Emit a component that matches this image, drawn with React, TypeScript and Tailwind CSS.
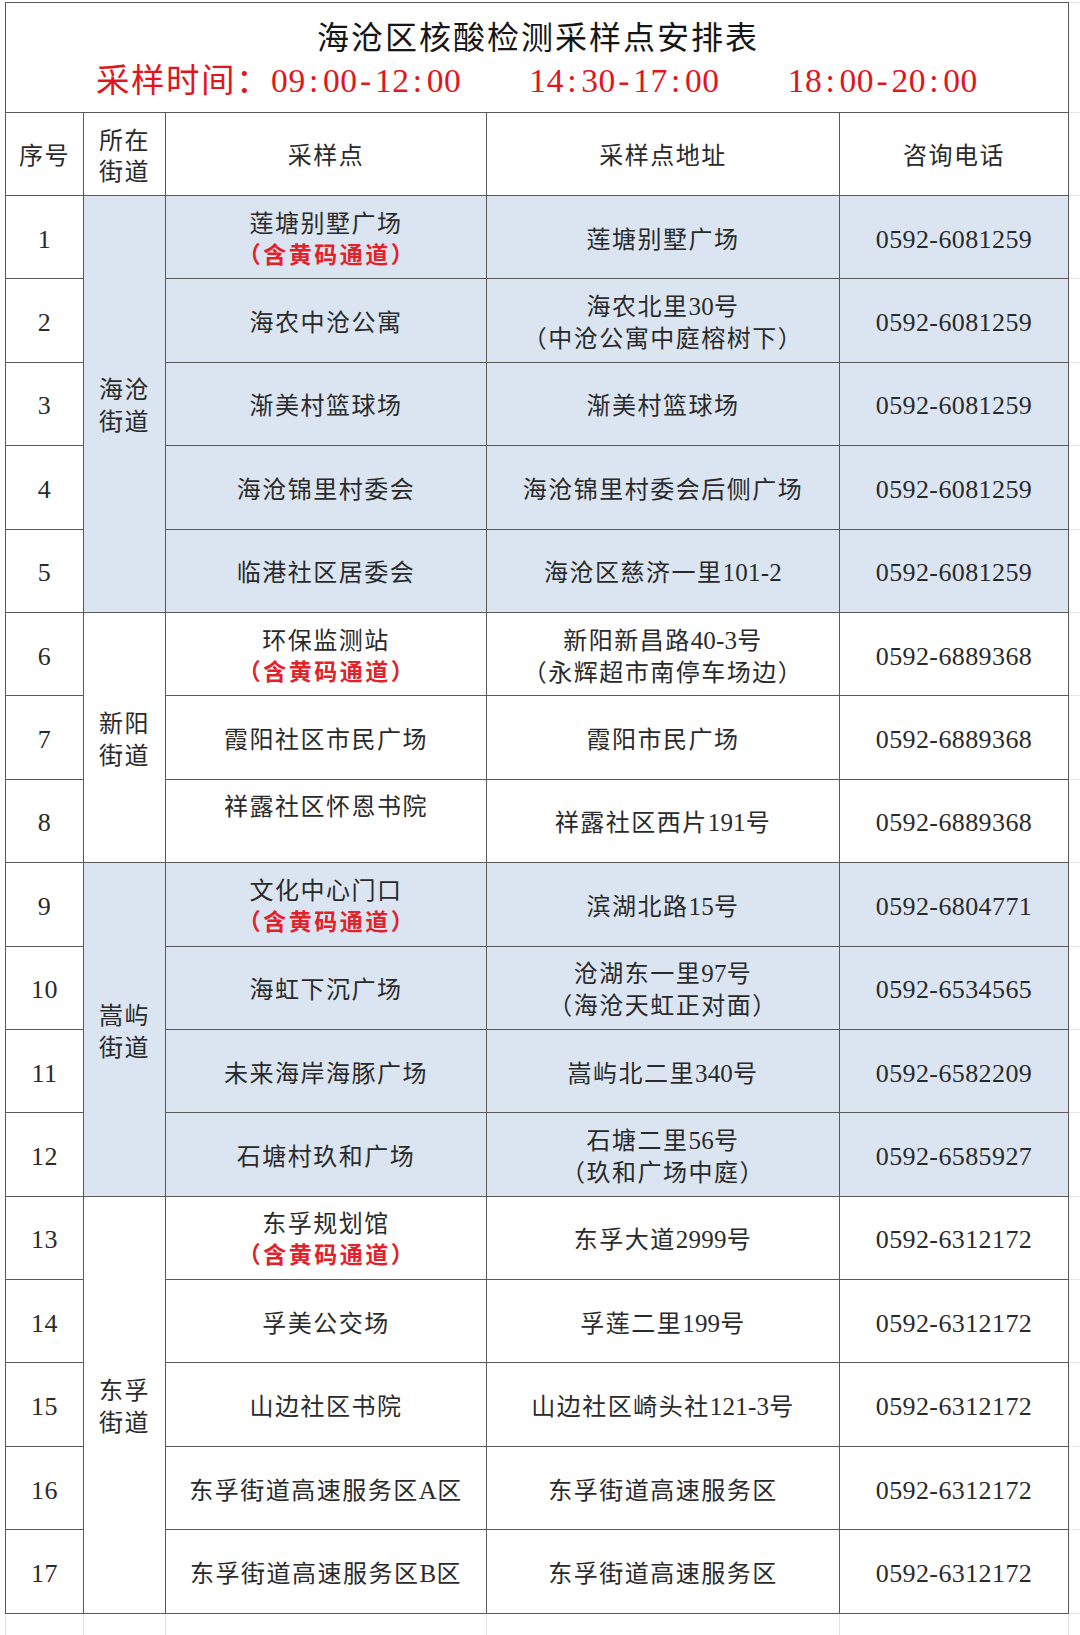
import React from "react";

type Row = {
  n: number;
  site: string;
  tag?: boolean;
  siteBlank?: boolean;
  addr: string[];
  phone: string;
};

type Group = { name: [string, string]; blue: boolean; span: string; rows: Row[] };

const groups: Group[] = [
  {
    name: ["海沧", "街道"],
    blue: true,
    span: "row-span-5",
    rows: [
      { n: 1, site: "莲塘别墅广场", tag: true, addr: ["莲塘别墅广场"], phone: "0592-6081259" },
      { n: 2, site: "海农中沧公寓", addr: ["海农北里30号", "（中沧公寓中庭榕树下）"], phone: "0592-6081259" },
      { n: 3, site: "渐美村篮球场", addr: ["渐美村篮球场"], phone: "0592-6081259" },
      { n: 4, site: "海沧锦里村委会", addr: ["海沧锦里村委会后侧广场"], phone: "0592-6081259" },
      { n: 5, site: "临港社区居委会", addr: ["海沧区慈济一里101-2"], phone: "0592-6081259" },
    ],
  },
  {
    name: ["新阳", "街道"],
    blue: false,
    span: "row-span-3",
    rows: [
      { n: 6, site: "环保监测站", tag: true, addr: ["新阳新昌路40-3号", "（永辉超市南停车场边）"], phone: "0592-6889368" },
      { n: 7, site: "霞阳社区市民广场", addr: ["霞阳市民广场"], phone: "0592-6889368" },
      { n: 8, site: "祥露社区怀恩书院", siteBlank: true, addr: ["祥露社区西片191号"], phone: "0592-6889368" },
    ],
  },
  {
    name: ["嵩屿", "街道"],
    blue: true,
    span: "row-span-4",
    rows: [
      { n: 9, site: "文化中心门口", tag: true, addr: ["滨湖北路15号"], phone: "0592-6804771" },
      { n: 10, site: "海虹下沉广场", addr: ["沧湖东一里97号", "（海沧天虹正对面）"], phone: "0592-6534565" },
      { n: 11, site: "未来海岸海豚广场", addr: ["嵩屿北二里340号"], phone: "0592-6582209" },
      { n: 12, site: "石塘村玖和广场", addr: ["石塘二里56号", "（玖和广场中庭）"], phone: "0592-6585927" },
    ],
  },
  {
    name: ["东孚", "街道"],
    blue: false,
    span: "row-span-5",
    rows: [
      { n: 13, site: "东孚规划馆", tag: true, addr: ["东孚大道2999号"], phone: "0592-6312172" },
      { n: 14, site: "孚美公交场", addr: ["孚莲二里199号"], phone: "0592-6312172" },
      { n: 15, site: "山边社区书院", addr: ["山边社区崎头社121-3号"], phone: "0592-6312172" },
      { n: 16, site: "东孚街道高速服务区A区", addr: ["东孚街道高速服务区"], phone: "0592-6312172" },
      { n: 17, site: "东孚街道高速服务区B区", addr: ["东孚街道高速服务区"], phone: "0592-6312172" },
    ],
  },
];

const FONT = "[font-family:'Liberation_Serif','Noto_Sans_CJK_SC',serif]";

function Mono({ s }: { s: string }) {
  return (
    <>
      {s.split("").map((c, i) => (
        <span key={i} className="inline-block w-[17.3px] text-center">
          {c}
        </span>
      ))}
    </>
  );
}

function Txt({ s }: { s: string }) {
  const parts = s.split(/([0-9A-Za-z\-]+)/);
  return (
    <span>
      {parts.map((p, i) =>
        /^[0-9A-Za-z\-]+$/.test(p) ? (
          <span key={i} className="text-[25px] tracking-[0.2px]">
            {p}
          </span>
        ) : (
          <React.Fragment key={i}>{p}</React.Fragment>
        )
      )}
    </span>
  );
}

const line = "border-[#5a5a5a]";

export default function App() {
  const cells: React.ReactNode[] = [];

  // title row
  cells.push(
    <div
      key="title"
      className={`col-span-5 border-l border-r border-t border-b ${line} bg-white flex flex-col items-center pt-[15px]`}
    >
      <div className="text-[32px] leading-[40px] tracking-[2px] text-[#161616] pl-[2px]">
        海沧区核酸检测采样点安排表
      </div>
      <div className="mt-[3px] flex text-[33.5px] leading-[40px] text-[#e3141c]">
        <span>采样时间：</span>
        <Mono s="09:00-12:00" />
        <span className="ml-[68px]">
          <Mono s="14:30-17:00" />
        </span>
        <span className="ml-[68px]">
          <Mono s="18:00-20:00" />
        </span>
      </div>
    </div>
  );
  cells.push(<div key="title-x" className="border-t border-b border-[#e6e6e6]" />);

  // header row
  const hdr = `border-r border-b ${line} bg-white flex flex-col items-center justify-center leading-[31px] pt-[5px]`;
  cells.push(
    <div key="h1" className={`border-l ${hdr}`}>
      序号
    </div>
  );
  cells.push(
    <div key="h2" className={hdr}>
      <span>所在</span>
      <span>街道</span>
    </div>
  );
  cells.push(
    <div key="h3" className={hdr}>
      采样点
    </div>
  );
  cells.push(
    <div key="h4" className={hdr}>
      采样点地址
    </div>
  );
  cells.push(
    <div key="h5" className={hdr}>
      咨询电话
    </div>
  );
  cells.push(<div key="h-x" className="border-b border-[#e6e6e6]" />);

  groups.forEach((g) => {
    const bg = g.blue ? "bg-[#dbe5f1]" : "bg-white";
    g.rows.forEach((r, idx) => {
      const base = `border-r border-b ${line} flex flex-col items-center justify-center leading-[32px] pt-[5px]`;
      cells.push(
        <div key={`n${r.n}`} className={`border-l ${base} bg-white text-[26px] tracking-[0.5px]`}>
          {r.n}
        </div>
      );
      if (idx === 0) {
        cells.push(
          <div key={`d${r.n}`} className={`${g.span} ${base} ${bg} leading-[31px]`}>
            <span>{g.name[0]}</span>
            <span>{g.name[1]}</span>
          </div>
        );
      }
      cells.push(
        <div key={`s${r.n}`} className={`${base} ${bg}`}>
          <Txt s={r.site} />
          {r.tag && (
            <span className="text-[23px] tracking-[2.5px] pl-[2px] font-bold text-[#e3212a]">（含黄码通道）</span>
          )}
          {r.siteBlank && <span>&nbsp;</span>}
        </div>
      );
      cells.push(
        <div key={`a${r.n}`} className={`${base} ${bg} leading-[31px]`}>
          {r.addr.map((a, i) => (
            <Txt key={i} s={a} />
          ))}
        </div>
      );
      cells.push(
        <div key={`p${r.n}`} className={`${base} ${bg} text-[26px] tracking-[0.4px]`}>
          {r.phone}
        </div>
      );
      cells.push(<div key={`x${r.n}`} className="border-b border-[#e6e6e6]" />);
    });
  });

  // faint trailing row
  const faint = "border-r border-[#e2e2e2]";
  cells.push(<div key="f1" className={`border-l ${faint}`} />);
  cells.push(<div key="f2" className={faint} />);
  cells.push(<div key="f3" className={faint} />);
  cells.push(<div key="f4" className={faint} />);
  cells.push(<div key="f5" className={faint} />);
  cells.push(<div key="f6" />);

  return (
    <div className={`w-[1080px] h-[1635px] bg-white overflow-hidden pt-[2px] pl-[5px] ${FONT}`}>
      <div className="grid grid-cols-[79px_82px_321px_353px_229px_11px] grid-rows-[111px_83px_repeat(17,83.4px)_21px] text-[24px] tracking-[1.5px] text-[#2a2a2a]">
        {cells}
      </div>
    </div>
  );
}
